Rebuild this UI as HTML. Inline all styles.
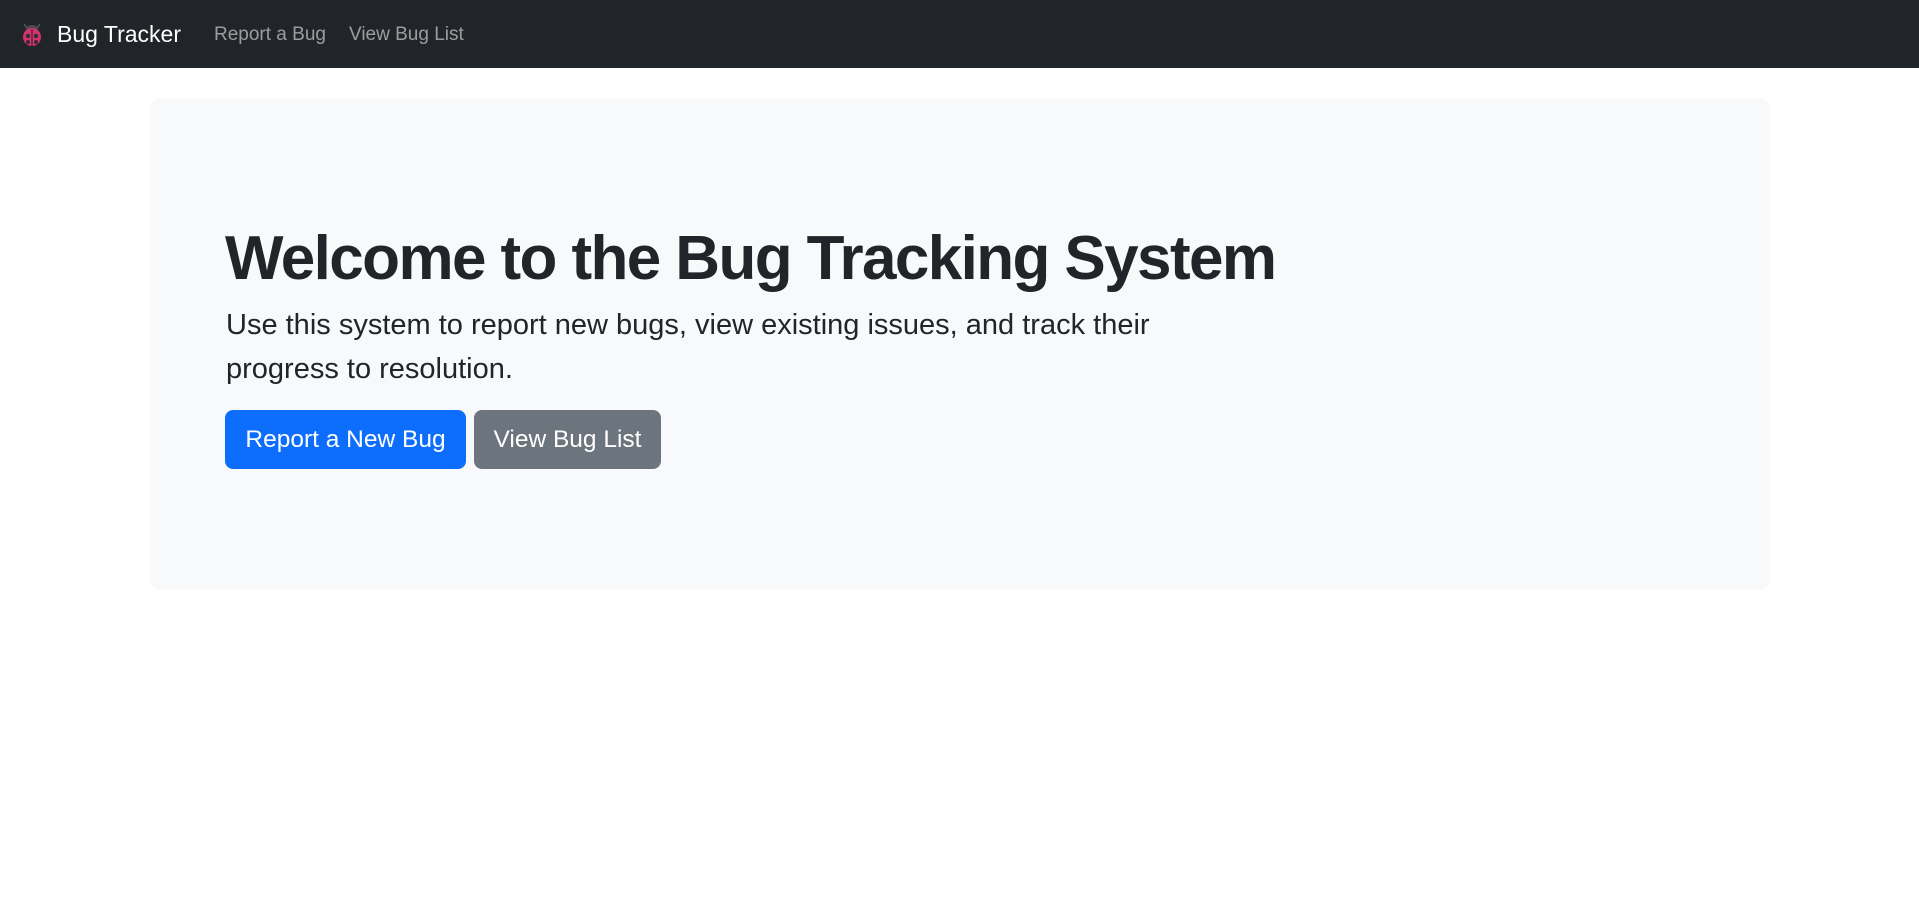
<!DOCTYPE html>
<html><head><meta charset="utf-8"><style>
*{box-sizing:border-box;margin:0;padding:0}
body{width:1919px;height:904px;background:#fff;font-family:"Liberation Sans",sans-serif;color:#212529;position:relative;overflow:hidden}
nav{position:absolute;left:0;top:0;width:1919px;height:68px;background:#212529}
.brand{position:absolute;left:57px;top:19px;font-size:23px;color:#fff;line-height:30px}
.link{position:absolute;top:22px;font-size:19px;color:rgba(255,255,255,.55);line-height:26px}
.card{position:absolute;left:150px;top:98px;width:1620px;height:492px;background:#f8f9fa;border-radius:10px}
h1{position:absolute;left:225px;top:224px;font-size:62px;font-weight:700;line-height:70px;letter-spacing:-1.6px;white-space:nowrap}
p{position:absolute;left:226px;top:303px;width:1010px;font-size:29px;line-height:44px}
.btn{position:absolute;top:410px;height:59px;border-radius:8px;color:#fff;font-size:24.5px;line-height:59px;text-align:center;white-space:nowrap}
</style></head><body>
<nav>
<svg style="position:absolute;left:19px;top:21px" width="26" height="26" viewBox="0 0 26 26">
<path d="M8 7 L5 3 M18 7 L21 3" stroke="#555" stroke-width="1.5"/>
<ellipse cx="13" cy="8" rx="6" ry="4" fill="#4a4a55"/>
<ellipse cx="13" cy="16" rx="9" ry="9" fill="#d6336c"/>
<line x1="13" y1="8" x2="13" y2="25" stroke="#3a2a35" stroke-width="1.2"/>
<circle cx="9" cy="15" r="2.2" fill="#3a2a35"/><circle cx="17" cy="15" r="2.2" fill="#3a2a35"/>
<circle cx="9" cy="21" r="2" fill="#3a2a35"/><circle cx="17" cy="21" r="2" fill="#3a2a35"/>
</svg>
<div class="brand">Bug Tracker</div>
<div class="link" style="left:214px">Report a Bug</div>
<div class="link" style="left:349px">View Bug List</div>
</nav>
<div class="card"></div>
<h1>Welcome to the Bug Tracking System</h1>
<p>Use this system to report new bugs, view existing issues, and track their progress to resolution.</p>
<div class="btn" style="left:225px;width:241px;background:#0d6efd">Report a New Bug</div>
<div class="btn" style="left:474px;width:187px;background:#6c757d">View Bug List</div>
</body></html>
